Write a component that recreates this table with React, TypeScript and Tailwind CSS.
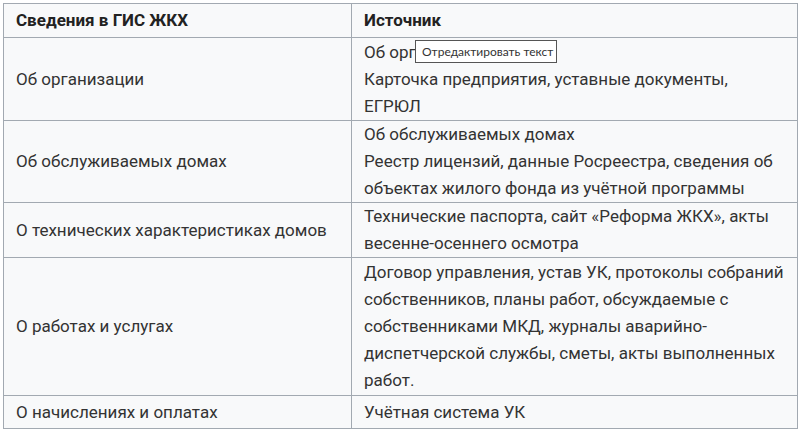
import React from "react";

const rows: { h: string; left: string; right: string[] }[] = [
  {
    h: "h-[83px]",
    left: "Об организации",
    right: ["Об организации", "Карточка предприятия, уставные документы,", "ЕГРЮЛ"],
  },
  {
    h: "h-[82px]",
    left: "Об обслуживаемых домах",
    right: [
      "Об обслуживаемых домах",
      "Реестр лицензий, данные Росреестра, сведения об",
      "объектах жилого фонда из учётной программы",
    ],
  },
  {
    h: "h-[54px]",
    left: "О технических характеристиках домов",
    right: ["Технические паспорта, сайт «Реформа ЖКХ», акты", "весенне-осеннего осмотра"],
  },
  {
    h: "h-[138px]",
    left: "О работах и услугах",
    right: [
      "Договор управления, устав УК, протоколы собраний",
      "собственников, планы работ, обсуждаемые с",
      "собственниками МКД, журналы аварийно-",
      "диспетчерской службы, сметы, акты выполненных",
      "работ.",
    ],
  },
  {
    h: "h-[33px]",
    left: "О начислениях и оплатах",
    right: ["Учётная система УК"],
  },
];

export default function App() {
  return (
    <div className="relative w-[801px] h-[431px] bg-white p-[3px] font-['Roboto',sans-serif] text-[17px] text-[#333]">
      <table className="w-[795px] border-collapse bg-[#f8f9fa] table-fixed">
        <colgroup>
          <col className="w-[348px]" />
          <col />
        </colgroup>
        <thead>
          <tr className="h-[34px]">
            <th className="border border-[#a2a9b1] px-3 text-left font-bold text-[#222]">
              Сведения в ГИС ЖКХ
            </th>
            <th className="border border-[#a2a9b1] px-3 text-left font-bold text-[#222]">Источник</th>
          </tr>
        </thead>
        <tbody>
          {rows.map((r) => (
            <tr key={r.left} className={r.h}>
              <td className="border border-[#a2a9b1] px-3 align-middle leading-[27px]">{r.left}</td>
              <td className="border border-[#a2a9b1] px-3 align-middle leading-[27px]">
                {r.right.map((line, i) => (
                  <div key={i} className="whitespace-nowrap">
                    {line}
                  </div>
                ))}
              </td>
            </tr>
          ))}
        </tbody>
      </table>

      {/* tooltip */}
      <div className="absolute left-[415px] top-[40px] h-[23px] w-[142px] border border-[#555] bg-white px-[6px] font-['Lato',sans-serif] text-[12px] leading-[21px] text-[#333] whitespace-nowrap">
        Отредактировать текст
      </div>
    </div>
  );
}
